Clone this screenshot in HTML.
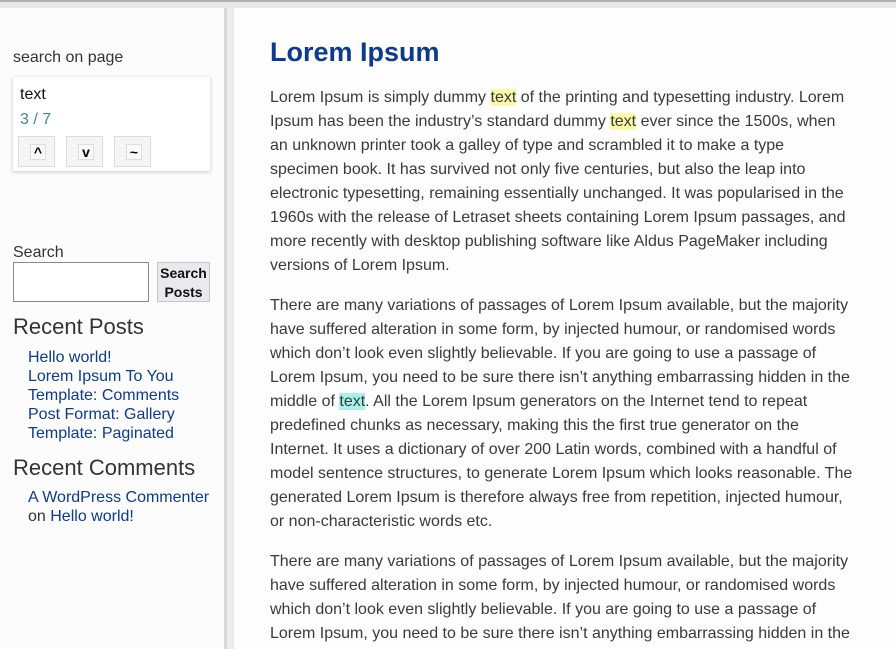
<!DOCTYPE html>
<html><head><meta charset="utf-8"><style>
*{margin:0;padding:0;box-sizing:border-box}
html,body{width:896px;height:649px;overflow:hidden}
body{background:#ececec;font-family:"Liberation Sans",Arial,sans-serif;position:relative}
.top{position:absolute;left:0;top:0;width:896px;height:8px;background:#e8e8e8;border-top:2px solid #b0b0b0}
.side{position:absolute;left:0;top:8px;width:227px;height:641px;background:#fcfcfc;border-right:3px solid #d8d8d8}
.main{position:absolute;left:234px;top:8px;width:662px;height:641px;background:#fdfdfd}
.abs{position:absolute;white-space:nowrap}
.s16{font-size:16px;color:#333}
.box{position:absolute;left:13px;top:77px;width:197px;height:94px;background:#fff;box-shadow:0 1px 4px rgba(0,0,0,.22)}
.btn{position:absolute;top:136px;width:37px;height:31px;background:#f5f5f5;border:1px solid #ddd}
.btn span{position:absolute;left:11px;top:7px;width:16px;height:16px;border:1px solid #ddd;background:#fafafa;font-size:14px;font-weight:bold;line-height:15px;text-align:center;color:#000}
a{color:#0d3a8c;text-decoration:none}
.links{position:absolute;left:28px;font-size:16px;line-height:19px;white-space:nowrap}
.p{position:absolute;left:270px;font-size:16px;line-height:24px;color:#3a3a3a;white-space:nowrap}
.y{background:#fbf8a8}.c{background:#a8f2ec}
</style></head><body>
<div class="top"></div>
<div class="side"></div>
<div class="main"></div>
<div class="abs s16" style="left:13px;top:49px">search on page</div>
<div class="box"></div>
<div class="abs" style="left:20px;top:86px;font-size:16px;color:#111">text</div>
<div class="abs" style="left:20px;top:111px;font-size:16px;color:#3f8a88">3 / 7</div>
<div class="btn" style="left:18px"><span>^</span></div>
<div class="btn" style="left:66px"><span>v</span></div>
<div class="btn" style="left:114px"><span>~</span></div>
<div class="abs s16" style="left:13px;top:244px">Search</div>
<div class="abs" style="left:13px;top:262px;width:136px;height:40px;border:1px solid #8a8a8a;background:#fff"></div>
<div class="abs" style="left:157px;top:262px;width:53px;height:40px;border:1px solid #c8c8c8;background:#e9e9ee;font-size:14px;font-weight:bold;line-height:19px;text-align:center;color:#111;padding-top:1px">Search<br>Posts</div>
<div class="abs" style="left:13px;top:314px;font-size:22px;color:#333">Recent Posts</div>
<div class="links" style="top:348px"><a>Hello world!</a><br><a>Lorem Ipsum To You</a><br><a>Template: Comments</a><br><a>Post Format: Gallery</a><br><a>Template: Paginated</a></div>
<div class="abs" style="left:13px;top:455px;font-size:22px;color:#333">Recent Comments</div>
<div class="links" style="top:488px;color:#333"><a>A WordPress Commenter</a><br>on <a>Hello world!</a></div>
<div class="abs" style="left:270px;top:37px;font-size:27px;font-weight:bold;color:#0d3a8c">Lorem Ipsum</div>
<div class="p" style="top:86px">Lorem Ipsum is simply dummy <span class="y">text</span> of the printing and typesetting industry. Lorem<br>Ipsum has been the industry’s standard dummy <span class="y">text</span> ever since the 1500s, when<br>an unknown printer took a galley of type and scrambled it to make a type<br>specimen book. It has survived not only five centuries, but also the leap into<br>electronic typesetting, remaining essentially unchanged. It was popularised in the<br>1960s with the release of Letraset sheets containing Lorem Ipsum passages, and<br>more recently with desktop publishing software like Aldus PageMaker including<br>versions of Lorem Ipsum.</div>
<div class="p" style="top:294px">There are many variations of passages of Lorem Ipsum available, but the majority<br>have suffered alteration in some form, by injected humour, or randomised words<br>which don’t look even slightly believable. If you are going to use a passage of<br>Lorem Ipsum, you need to be sure there isn’t anything embarrassing hidden in the<br>middle of <span class="c">text</span>. All the Lorem Ipsum generators on the Internet tend to repeat<br>predefined chunks as necessary, making this the first true generator on the<br>Internet. It uses a dictionary of over 200 Latin words, combined with a handful of<br>model sentence structures, to generate Lorem Ipsum which looks reasonable. The<br>generated Lorem Ipsum is therefore always free from repetition, injected humour,<br>or non-characteristic words etc.</div>
<div class="p" style="top:550px">There are many variations of passages of Lorem Ipsum available, but the majority<br>have suffered alteration in some form, by injected humour, or randomised words<br>which don’t look even slightly believable. If you are going to use a passage of<br>Lorem Ipsum, you need to be sure there isn’t anything embarrassing hidden in the<br>middle of <span class="y">text</span>. All the Lorem Ipsum generators on the Internet tend to repeat</div>
</body></html>
